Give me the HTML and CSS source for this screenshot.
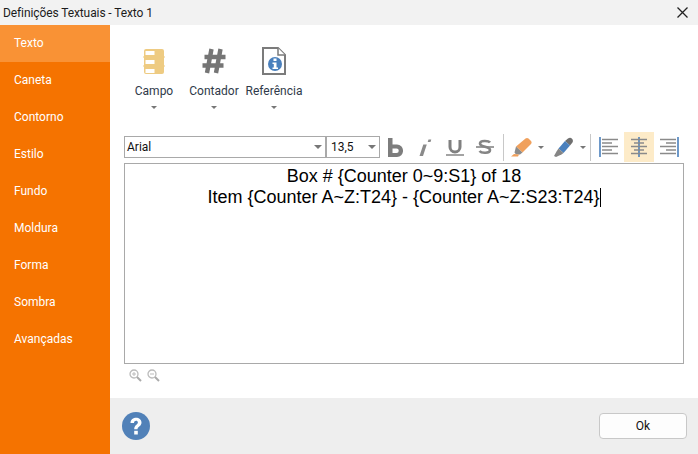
FILE: index.html
```html
<!DOCTYPE html>
<html lang="pt">
<head>
<meta charset="utf-8">
<title>Definições Textuais - Texto 1</title>
<link rel="stylesheet" href="styles.css">
</head>
<body>
<div class="window">
  <header class="titlebar">
    <span class="title">Definições Textuais - Texto 1</span>
    <svg class="close" width="11" height="11" viewBox="0 0 11 11"><path d="M.5.5l10 10M10.500.5l-10 10" stroke="#222" stroke-width="1.300" fill="none"/></svg>
  </header>
  <div class="main">
    <nav class="sidebar">
      <div class="nav-item active">Texto</div>
      <div class="nav-item">Caneta</div>
      <div class="nav-item">Contorno</div>
      <div class="nav-item">Estilo</div>
      <div class="nav-item">Fundo</div>
      <div class="nav-item">Moldura</div>
      <div class="nav-item">Forma</div>
      <div class="nav-item">Sombra</div>
      <div class="nav-item">Avançadas</div>
    </nav>
    <div class="content">
      <section class="ribbon">
        <div class="rib-btn rib-campo">
          <svg width="22" height="28" viewBox="0 0 22 28"><path d="M3 2h16a2 2 0 0 1 2 2v5l1 1-1 1v7l1 1-1 1v5a2 2 0 0 1-2 2H3a2 2 0 0 1-2-2v-5l-1-1 1-1v-7l-1-1 1-1V4a2 2 0 0 1 2-2z" fill="#eecb82"/><path d="M2.500 4h9v4h-9zM2.500 13h9v4h-9zM2.500 22h9v4h-9z" fill="#fff"/></svg>
          <span class="rib-label">Campo</span>
          <i class="caret"></i>
        </div>
        <div class="rib-btn rib-contador">
          <svg width="24" height="28" viewBox="0 0 24 28"><path d="M9.500 2L5 26M18.500 2L14 26M2.500 10H23.500M0.500 18.500H21.500" stroke="#757575" stroke-width="4.400" fill="none"/></svg>
          <span class="rib-label">Contador</span>
          <i class="caret"></i>
        </div>
        <div class="rib-btn rib-ref">
          <svg width="24" height="28" viewBox="0 0 24 28"><path d="M1 1h15l7 7v19H1z" fill="#fff" stroke="#7b7b7b" stroke-width="2"/><path d="M16 1v7h7" fill="#fff" stroke="#7b7b7b" stroke-width="1.500"/><circle cx="13" cy="17" r="7" fill="#4a80bd"/><path d="M11.500 11.500h3v2.500h-3zM10.500 15.500h4v5h1.500v1.500h-5.500v-1.500h1.300v-3.500h-1.300z" fill="#fff"/></svg>
          <span class="rib-label">Referência</span>
          <i class="caret"></i>
        </div>
      </section>
      <section class="toolbar">
        <div class="select select-font"><span>Arial</span><i class="caret"></i></div>
        <div class="select select-size"><span>13,5</span><i class="caret"></i></div>
        <div class="tool"><svg width="16" height="19" viewBox="0 0 16 19"><path d="M1 0h4.500v6.500h4.500a5.800 6 0 0 1 0 12.500H1zM5.500 10.500v4.500h4a2.200 2.200 0 0 0 0-4.500z" fill="#7d7d7d"/></svg></div>
        <div class="tool"><svg width="14" height="19" viewBox="0 0 14 19"><path d="M10.500 1.500l-.8 2.600h2.800l.8-2.600zM8.800 6.500L5 18H1.500L5.300 6.500z" fill="#8a8a8a"/></svg></div>
        <div class="tool"><svg width="18" height="18" viewBox="0 0 18 18"><path d="M4 2v7a5 5 0 0 0 10 0V2" fill="none" stroke="#808080" stroke-width="3"/><path d="M0 17h18" stroke="#999" stroke-width="1.800"/></svg></div>
        <div class="tool"><svg width="20" height="18" viewBox="0 0 20 18"><path d="M15 4.500C13.500 2.500 5 2 5 5.500c0 4 10 2.500 10 6.500 0 3.500-8.500 3.500-10.500 1" fill="none" stroke="#858585" stroke-width="2.600"/><path d="M1 9h18" stroke="#858585" stroke-width="1.600"/></svg></div>
        <div class="sep"></div>
        <div class="tool-drop tool-marker">
          <svg width="21" height="21" viewBox="0 0 21 21"><path d="M14.500 1.500c1-.8 2-.8 3 0l2.500 2.500c.8 1 .8 2 0 3l-8.500 8.500-6.500-6z" fill="#f0a05c"/><path d="M5 9.500l6.500 6-2.500 2H5l-1.500-2z" fill="#8c8c8c"/><path d="M3 17l5 .5-1 2H0z" fill="#f0a05c"/></svg>
          <i class="caret"></i>
        </div>
        <div class="tool-drop tool-pen">
          <svg width="21" height="21" viewBox="0 0 21 21"><path d="M15 1.500c1.500-1 3-.8 4 .2s1.300 2.500.3 4L17 8.500 12 4z" fill="#6f6f6f"/><path d="M12 4l5 4.500-6.500 7.500-5-4.500z" fill="#4a80bd"/><path d="M5.500 11.500l5 4.500-2 1.500L3 20l-2-1 2.500-4.500z" fill="#858585"/></svg>
          <i class="caret"></i>
        </div>
        <div class="sep sep-b"></div>
        <div class="tool-align">
          <svg width="20" height="20" viewBox="0 0 20 20"><path d="M1 0v20" stroke="#4a80bd" stroke-width="1.600"/><path d="M3 2.500h16M3 6h10M3 9.500h16M3 13h10M3 16.500h16" stroke="#8a8a8a" stroke-width="1.400"/></svg>
        </div>
        <div class="tool-align on">
          <svg width="20" height="20" viewBox="0 0 20 20"><path d="M10 0v20" stroke="#4a80bd" stroke-width="1.600"/><path d="M2 2.500h16M5 6h10M2 9.500h16M5 13h10M2 16.500h16" stroke="#8a8a8a" stroke-width="1.400"/></svg>
        </div>
        <div class="tool-align">
          <svg width="20" height="20" viewBox="0 0 20 20"><path d="M19 0v20" stroke="#4a80bd" stroke-width="1.600"/><path d="M1 2.500h16M7 6h10M1 9.500h16M7 13h10M1 16.500h16" stroke="#8a8a8a" stroke-width="1.400"/></svg>
        </div>
      </section>
      <section class="editor">
        <p class="line">Box # {Counter 0~9:S1} of 18</p>
        <p class="line">Item {Counter A~Z:T24} - {Counter A~Z:S23:T24}<span class="cursor"></span></p>
      </section>
      <div class="zoom">
        <svg width="13" height="13" viewBox="0 0 13 13"><circle cx="5" cy="5" r="4" fill="none" stroke="#bbb" stroke-width="1.300"/><path d="M8 8l4 4" stroke="#aaa" stroke-width="2"/><path d="M3 5h4M5 3v4" stroke="#bbb"/></svg>
        <svg width="13" height="13" viewBox="0 0 13 13"><circle cx="5" cy="5" r="4" fill="none" stroke="#bbb" stroke-width="1.300"/><path d="M8 8l4 4" stroke="#aaa" stroke-width="2"/><path d="M3 5h4" stroke="#bbb"/></svg>
      </div>
      <footer class="footer">
        <svg width="28" height="28" viewBox="0 0 28 28"><circle cx="14" cy="14" r="14" fill="#5181b8"/><path d="M8.500 11c0-7 11-7 11-.5 0 4-4 4-4 6.700h-3.300c0-4.200 3.700-4.700 3.700-6.700 0-2.300-3.900-2.300-3.900.5z" fill="#fff"/><path d="M12.200 18.800h3.600v3.700h-3.600z" fill="#fff"/></svg>
        <button class="ok" type="button">Ok</button>
      </footer>
    </div>
  </div>
</div>
</body>
</html>
```
FILE: styles.css
```css
* { box-sizing: border-box; }
html, body { margin: 0; padding: 0; }
body { width: 698px; height: 454px; overflow: hidden; background: #fff; font-family: Roboto, "Open Sans", sans-serif; font-size: 12px; color: #222; }
.window { display: flex; flex-direction: column; height: 454px; }
.titlebar { height: 25px; flex: none; background: #f2f2f2; display: flex; align-items: center; justify-content: space-between; padding: 0 10px 0 3px; }
.title { font-size: 12px; color: #1c1c1c; letter-spacing: -0.1px; }
.main { flex: 1; display: flex; min-height: 0; }
.sidebar { width: 110px; flex: none; background: #f57300; display: flex; flex-direction: column; }
.nav-item { height: 37px; padding: 0 14px 2px; display: flex; align-items: center; color: #fff; font-size: 12px; }
.nav-item.active { background: #f99235; }
.content { flex: 1; display: flex; flex-direction: column; min-width: 0; }
.ribbon { height: 111px; flex: none; display: flex; align-items: flex-start; padding: 22px 0 0 19px; }
.rib-btn { display: flex; flex-direction: column; align-items: center; color: #333; }
.rib-campo { width: 50px; }
.rib-contador { width: 60px; margin-left: 5px; }
.rib-ref { width: 60px; }
.rib-label { margin-top: 8px; line-height: 16px; font-size: 12px; color: #2f3a4a; }
.rib-btn .caret { margin-top: 7px; }
.caret { display: block; width: 0; height: 0; border-left: 3px solid transparent; border-right: 3px solid transparent; border-top: 3px solid #777; }
.toolbar { height: 22px; margin-left: 14px; flex: none; display: flex; align-items: center; }
.select { height: 22px; background: #fff; border: 1px solid #a9a9a9; display: flex; align-items: center; justify-content: space-between; padding: 0 3px 0 2px; font-size: 12px; color: #111; flex: none; }
.select .caret { border-left-width: 4px; border-right-width: 4px; border-top-width: 4px; }
.select-font { width: 202px; }
.select-size { width: 54px; padding-left: 4px; }
.tool { width: 30px; height: 22px; display: flex; align-items: center; justify-content: center; flex: none; }
.sep { width: 1px; height: 27px; background: #c8c8c8; margin: 0 7px 0 3px; flex: none; }
.sep-b { margin: 0 3px 0 0; }
.tool-drop { display: flex; align-items: center; gap: 6px; flex: none; }
.tool-marker { width: 42px; }
.tool-pen { width: 37px; }
.tool-align { width: 30px; height: 30px; display: flex; align-items: center; justify-content: center; flex: none; }
.tool-align.on { background: #fdebc8; }
.editor { height: 201px; margin: 5px 14px 0 14px; flex: none; border: 1px solid #a9a9a9; background: #fff; text-align: center; font-family: "Liberation Sans", Arial, sans-serif; font-size: 18px; line-height: 21px; color: #000; padding-top: 2px; }
.line { margin: 0; }
.cursor { display: inline-block; width: 1px; height: 19px; background: #000; vertical-align: -4px; }
.zoom { display: flex; gap: 5px; padding: 5px 0 0 19px; height: 34px; flex: none; }
.footer { flex: 1; background: #eeeeee; display: flex; align-items: center; justify-content: space-between; padding: 0 11px 0 12px; }
.ok { width: 88px; height: 26px; background: #fdfdfd; border: 1px solid #c8c8c8; border-radius: 4px; font-family: Roboto, "Open Sans", sans-serif; font-size: 12px; color: #111; padding: 0; }
```
